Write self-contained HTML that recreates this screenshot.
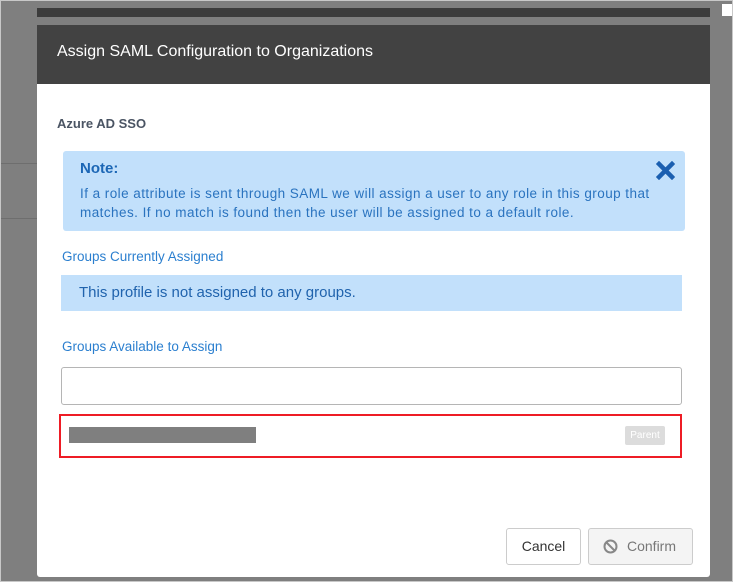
<!DOCTYPE html>
<html><head><style>
body{margin:0;width:733px;height:582px;background:#7f7f7f;position:relative;overflow:hidden;font-family:"Liberation Sans",sans-serif}
.a{position:absolute}
</style></head><body>
<div class="a" style="left:0;top:0;width:731px;height:580px;border:1px solid #c8c8c8"></div>
<div class="a" style="left:1px;top:163px;width:36px;height:1px;background:#6e6e6e"></div>
<div class="a" style="left:1px;top:218px;width:36px;height:1px;background:#6e6e6e"></div>
<div class="a" style="left:722px;top:4px;width:10px;height:12px;background:#fff"></div>
<div class="a" style="left:37px;top:8px;width:673px;height:9px;background:#3c3c3c"></div>
<div class="a" style="left:37px;top:25px;width:673px;height:552px;background:#fff;border-radius:0 0 3px 3px"></div>
<div class="a" style="left:37px;top:25px;width:673px;height:59px;background:#424242"></div>
<div class="a" style="left:57px;top:43px;color:#fff;font-size:16px">Assign SAML Configuration to Organizations</div>
<div class="a" style="left:57px;top:116px;color:#4a5463;font-size:13px;font-weight:bold">Azure AD SSO</div>
<div class="a" style="left:63px;top:151px;width:622px;height:80px;background:#c2e0fb;border-radius:3px"></div>
<div class="a" style="left:80px;top:160px;color:#1b66b5;font-size:15px;font-weight:bold">Note:</div>
<svg class="a" style="left:656px;top:161px" width="19" height="19" viewBox="0 0 19 19"><path d="M3 3L16 16M16 3L3 16" stroke="#1b5fb0" stroke-width="4.5" stroke-linecap="square"/></svg>
<div class="a" style="left:80px;top:184px;width:620px;white-space:nowrap;color:#2a73bf;font-size:13.5px;letter-spacing:0.45px;line-height:19px">If a role attribute is sent through SAML we will assign a user to any role in this group that<br>matches. If no match is found then the user will be assigned to a default role.</div>
<div class="a" style="left:62px;top:249px;color:#2b7fcf;font-size:13.5px">Groups Currently Assigned</div>
<div class="a" style="left:61px;top:275px;width:621px;height:36px;background:#c2e0fb"></div>
<div class="a" style="left:79px;top:284px;color:#2063ad;font-size:15px">This profile is not assigned to any groups.</div>
<div class="a" style="left:62px;top:339px;color:#2b7fcf;font-size:13.5px">Groups Available to Assign</div>
<div class="a" style="left:61px;top:367px;width:619px;height:36px;border:1px solid #b5b5b5;border-radius:3px"></div>
<div class="a" style="left:59px;top:414px;width:619px;height:40px;border:2px solid #ee1c25"></div>
<div class="a" style="left:69px;top:427px;width:187px;height:16px;background:#7f7f7f"></div>
<div class="a" style="left:625px;top:426px;width:40px;height:19px;background:#dcdcdc;border-radius:2px;color:#fff;font-size:10px;line-height:19px;text-align:center">Parent</div>
<div class="a" style="left:506px;top:528px;width:73px;height:35px;border:1px solid #ccc;border-radius:3px;color:#333;font-size:14px;line-height:35px;text-align:center;background:#fff">Cancel</div>
<div class="a" style="left:588px;top:528px;width:103px;height:35px;border:1px solid #ccc;border-radius:3px;color:#777;font-size:14px;line-height:35px;background:#f4f4f4"><svg style="position:absolute;left:14px;top:10px" width="15" height="15" viewBox="0 0 15 15"><circle cx="7.5" cy="7.5" r="6" fill="none" stroke="#888" stroke-width="2"/><path d="M3.5 3.5L11.5 11.5" stroke="#888" stroke-width="2"/></svg><span style="position:absolute;left:38px">Confirm</span></div>
</body></html>
